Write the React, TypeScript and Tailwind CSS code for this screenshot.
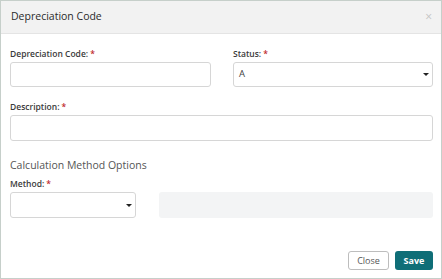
import React from "react";

const Label = ({ text }: { text: string }) => (
  <div className="text-[8.5px] leading-[12px] font-semibold text-[#3a3a3a] h-[12px]">
    {text}
    <span className="text-[#c0282d] ml-[2px]">*</span>
  </div>
);

const Caret = () => (
  <svg width="6" height="3" viewBox="0 0 6 3" className="block">
    <path d="M0 0 L6 0 L3 3 Z" fill="#222" />
  </svg>
);

export default function App() {
  return (
    <div
      className="w-[442px] h-[279px] bg-white border border-[#c6cfca] flex flex-col"
      style={{ fontFamily: '"Open Sans", "Liberation Sans", sans-serif' }}
    >
      <div className="h-[33px] bg-[#f2f2f2] border-b border-[#e4e4e4] flex items-center justify-between pl-[10px] pr-[9px] shrink-0">
        <div className="text-[10.5px] font-medium text-[#2a2a2a]">Depreciation Code</div>
        <div className="text-[12px] text-[#c4c4c4] leading-none">×</div>
      </div>
      <div className="flex-1 flex flex-col pl-[9px] pr-[8px]">
        <div className="grid grid-cols-[201px_200px] gap-x-[22px] mt-[14px]">
          <div className="flex flex-col">
            <Label text="Depreciation Code:" />
            <div className="mt-[2px] h-[25px] border border-[#d6d6d6] rounded-[3px]" />
          </div>
          <div className="flex flex-col">
            <Label text="Status:" />
            <div className="mt-[2px] h-[25px] border border-[#d6d6d6] rounded-[3px] flex items-center justify-between pl-[5px] pr-[3px]">
              <span className="text-[9.5px] text-[#444]">A</span>
              <Caret />
            </div>
          </div>
        </div>
        <div className="mt-[14px] flex flex-col">
          <Label text="Description:" />
          <div className="mt-[2px] h-[26px] border border-[#d6d6d6] rounded-[3px]" />
        </div>
        <div className="mt-[17px] text-[10.5px] leading-[14px] text-[#555]">
          Calculation Method Options
        </div>
        <div className="mt-[6px]">
          <Label text="Method:" />
        </div>
        <div className="mt-[2px] flex gap-[23px]">
          <div className="w-[126px] h-[26px] border border-[#d6d6d6] rounded-[3px] flex items-center justify-end pr-[3px]">
            <Caret />
          </div>
          <div className="flex-1 h-[26px] bg-[#f3f4f5] rounded-[3px]" />
        </div>
        <div className="mt-auto mb-[8px] flex justify-end gap-[6px]">
          <button className="w-[41px] h-[19px] border border-[#bdbdbd] rounded-[3px] bg-white text-[9px] text-[#555] flex items-center justify-center">
            Close
          </button>
          <button className="w-[38px] h-[19px] rounded-[3px] bg-[#0f6e77] text-[9px] font-bold text-white flex items-center justify-center">
            Save
          </button>
        </div>
      </div>
    </div>
  );
}
